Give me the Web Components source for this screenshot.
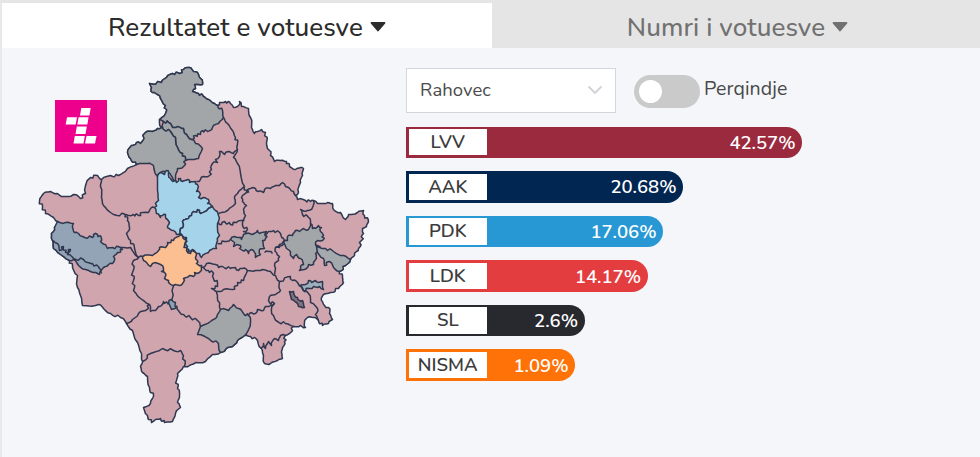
<!DOCTYPE html>
<html lang="sq">
<head>
<meta charset="utf-8">
<title>Rezultatet e votuesve</title>
<style>
  body {
    margin: 0;
    background: #f4f6f9;
    font-family: Nunito, Lato, "Noto Sans", sans-serif;
    color: #333;
  }
</style>
</head>
<body>
<results-page></results-page>

<script>
class TabItem extends HTMLElement {
  constructor() {
    super();
    this.attachShadow({ mode: "open" }).innerHTML = `
      <style>
        :host {
          display: flex;
          align-items: center;
          justify-content: center;
          gap: 7px;
          box-sizing: border-box;
          padding-top: 4px;
          font-size: 26px;
          font-weight: 500;
          letter-spacing: var(--tab-spacing, 0);
          color: #717171;
          background: #e5e5e5;
        }
        :host([active]) {
          color: #2c2c2c;
          background: #fff;
        }
        svg { margin-top: -1px; }
      </style>
      <span><slot></slot></span>
      <svg width="16" height="10" viewBox="0 0 16 10">
        <path d="M1.5 1h13L8 8.5z" fill="currentColor" stroke="currentColor" stroke-width="1.8" stroke-linejoin="round"/>
      </svg>`;
  }
}
customElements.define("tab-item", TabItem);

class CitySelect extends HTMLElement {
  constructor() {
    super();
    this.attachShadow({ mode: "open" }).innerHTML = `
      <style>
        :host {
          display: flex;
          align-items: center;
          justify-content: space-between;
          box-sizing: border-box;
          width: 210px;
          height: 45px;
          padding: 0 12px 0 13px;
          border: 1px solid #d3d7dd;
          background: #fff;
          font-size: 18.5px;
          letter-spacing: .05px;
          color: #4a4a4a;
        }
      </style>
      <span><slot></slot></span>
      <svg width="16" height="10" viewBox="0 0 16 10">
        <path d="M1.5 1.5 8 8l6.5-6.5" fill="none" stroke="#cfd2d6" stroke-width="1.8"/>
      </svg>`;
  }
}
customElements.define("city-select", CitySelect);

class ToggleSwitch extends HTMLElement {
  constructor() {
    super();
    this.attachShadow({ mode: "open" }).innerHTML = `
      <style>
        :host {
          display: flex;
          gap: 4px;
          font-size: 19.5px;
          letter-spacing: .1px;
          line-height: 24px;
          color: #484848;
        }
        .track {
          box-sizing: border-box;
          width: 66px;
          height: 33px;
          margin-top: 7px;
          padding: 5px;
          border-radius: 17px;
          background: #cacaca;
        }
        .knob {
          width: 23px;
          height: 23px;
          border-radius: 50%;
          background: #fff;
        }
        .text { padding-top: 9px; }
      </style>
      <div class="track"><div class="knob"></div></div>
      <span class="text"><slot></slot></span>`;
  }
}
customElements.define("toggle-switch", ToggleSwitch);

class PartyBar extends HTMLElement {
  connectedCallback() {
    this.attachShadow({ mode: "open" }).innerHTML = `
      <style>
        :host {
          display: flex;
          align-items: center;
          justify-content: space-between;
          box-sizing: border-box;
          width: ${this.getAttribute("width")}px;
          height: 31.6px;
          padding: 0 6.5px 0 2.5px;
          border-radius: 0 16px 16px 0;
          background: ${this.getAttribute("color")};
        }
        .name {
          width: 78.5px;
          height: 26.4px;
          line-height: 26px;
          background: #fff;
          color: #3c3c3c;
          font-size: 18.5px;
          font-weight: 600;
          text-align: center;
        }
        .value {
          padding-top: 1px;
          color: #fff;
          font-size: 18.5px;
          font-weight: 600;
        }
      </style>
      <span class="name"><slot></slot></span>
      <span class="value">${this.getAttribute("value")}</span>`;
  }
}
customElements.define("party-bar", PartyBar);

class TvLogo extends HTMLElement {
  constructor() {
    super();
    this.attachShadow({ mode: "open" }).innerHTML = `
      <style>
        :host { display: block; width: 52px; height: 52px; }
        svg { display: block; }
      </style>
      <svg width="52" height="52" viewBox="0 0 52 52">
        <rect width="52" height="52" fill="#ec008c"/>
        <g fill="#fff">
          <path d="M26.3 8h9.4l-1.3 7.6H25z"/>
          <path d="M12 17.2h10l-1.3 7.3h-10z"/>
          <path d="M23.6 17.2h10l-1.3 7.3h-10z"/>
          <path d="M21.8 26.6h10l-1.3 7.3h-10z"/>
          <path d="M19.8 36h10l-1.3 7.5h-10z"/>
          <path d="M31.5 36h10l-1.5 7.5H30z"/>
        </g>
      </svg>`;
  }
}
customElements.define("tv-logo", TvLogo);

// Country outline, clockwise from the north-west corner
const OUTLINE = `149,83 161,82 166,77 172,73 179,73 183,69 189,67 193,71 197,72 200,78 202,84 194,84 195,88 192,91
  198,93 203,96 208,99 214,103 217,105 219,102 225,101 230,103 233,107 237,106 239,101 241,106 248,108 250,117
  251,127 254,133 257,131 261,129 265,132 266,142 269,150 270,155 274,161 280,160 286,161 289,166 295,169 300,167
  303,168 302,175 300,182 298,192 295,195 297,199 305,200 310,201 313,200 317,203 322,203 327,202 332,203 333,209
  340,212 345,219 348,214 357,212 363,210 364,215 368,221 366,226 362,228 363,233 361,240 358,248 356,251 354,255
  350,259 345,265 339,271 342,277 343,282 338,288 330,292 323,294 321,300 324,305 328,307 329,313 332,319 328,323
  322,325 318,320 313,317 307,317 304,322 305,327 300,325 293,326 289,333 285,335 284,341 282,347 281,352 282,358
  277,360 270,363 264,363 263,355 261,348 257,340 250,336 244,335 237,340 232,346 225,349 220,352 212,354 205,361
  195,362 189,365 183,366 177,373 176,380 177,388 179,395 177,402 180,407 175,413 172,421 164,422 160,418 155,419
  151,422 147,415 143,407 150,403 153,396 149,387 147,376 142,372 140,366 142,361 141,353 137,342 132,330 126,323
  120,317 110,313 103,308 98,304 95,305 82,305 80,295 77,287 77,275 72,267 69,260 60,254 53,248 52,240 51,233
  54,227 57,221 53,217 45,213 42,207 39,201 43,193 50,191 57,193 63,196 73,194 80,198 85,193 86,182 90,177 97,175
  101,179 110,175 118,175 127,168 136,164 130,158 127,152 131,145 136,142 140,143 145,132 152,131 157,128 161,127
  159,119 165,113 165,105 160,98 157,94 152,92 151,87`;

// Municipalities led by someone other than the pink party
const AREAS = [
  ["#a3a6a8", "149,83 161,82 166,77 172,73 179,73 183,69 189,67 193,71 197,72 200,78 202,84 194,84 195,88 192,91 198,93 203,96 208,99 214,103 217,105 222,110 223,117 218,123 212,127 207,131 202,130 200,134 195,135 191,139 186,134 183,128 177,126 172,127 168,122 163,121 159,119 165,113 165,105 160,98 157,94 152,92 151,87"],
  ["#a3a6a8", "163,121 168,122 172,127 177,126 183,128 186,134 191,139 195,143 202,148 198,158 194,159 185,160 182,153 177,147 175,137 170,131 162,128 161,127"],
  ["#a3a6a8", "162,128 170,131 175,137 177,147 182,153 185,160 183,166 177,168 175,175 176,182 172,177 168,172 160,172 157,176 153,165 147,163 136,164 130,158 127,152 131,145 136,142 140,143 145,132 152,131 157,128 161,127"],
  ["#a5d3ea", "157,176 160,172 164,174 166,170 168,172 170,178 176,182 178,178 180,178 182,181 187,179 189,182 195,181 197,184 196,191 199,192 198,197 203,197 208,199 207,203 212,206 208,208 200,213 199,210 193,211 191,215 188,218 182,221 183,225 180,228 181,234 176,234 173,230 167,227 169,222 167,219 165,214 162,215 160,217 156,213 154,207 158,200 157,190"],
  ["#a5d3ea", "212,206 215,210 218,215 217,223 219,235 217,240 216,248 211,249 208,252 201,257 199,253 196,253 192,249 187,252 187,246 185,242 186,237 181,234 180,228 183,225 182,221 188,218 191,215 193,211 199,210 200,213 208,208"],
  ["#fcbf91", "181,234 184,239 186,238 184,245 186,250 190,253 192,250 196,253 195,257 197,260 196,263 201,265 201,270 199,272 194,272 193,276 189,275 183,278 182,283 179,285 173,285 169,283 168,280 164,278 165,273 161,271 163,268 160,264 152,263 150,266 145,261 142,256 152,255 158,250 159,247 165,247 167,242 173,240 178,236"],
  ["#93a4b6", "57,221 65,222 73,223 72,227 74,232 78,233 82,236 92,237 93,234 97,234 101,238 100,241 102,243 105,244 107,248 112,247 120,247 122,249 117,252 113,256 114,260 112,263 108,264 103,267 99,274 93,272 85,269 78,265 73,259 69,260 60,254 53,248 52,240 51,233 54,227"],
  ["#a3a6a8", "230,239 234,236 238,237 241,239 243,234 246,233 252,234 257,230 259,233 266,231 265,238 262,240 264,248 259,249 260,254 255,257 254,252 251,249 248,253 245,249 242,250 239,248 240,245 236,244 233,246 234,242"],
  ["#a3a6a8", "283,241 287,240 287,236 292,235 295,230 299,231 303,228 308,229 310,223 312,228 315,228 318,225 321,227 320,231 323,235 322,240 317,240 315,244 317,249 315,253 316,258 313,264 308,264 306,268 299,270 300,266 303,264 300,258 296,254 293,258 290,255 289,250 286,248"],
  ["#a3a9ad", "316,246 325,248 333,251 343,255 350,259 345,265 339,271 333,267 329,261 324,265 323,258 317,252"],
  ["#9bb0bc", "300,285 305,284 308,280 311,282 315,280 318,282 322,281 323,289 319,286 313,286 309,288 303,290"],
  ["#81717f", "289,291 293,291 294,295 297,297 299,300 302,300 304,307 298,306 296,302 291,299"],
  ["#8da2b5", "168,302 171,299 175,302 176,307 171,309"],
  ["#a3a6a8", "200,326 210,321 216,317 220,309 228,310 233,304 238,308 243,313 248,315 250,322 246,333 244,335 237,340 232,346 225,349 220,352 218,343 208,338 197,334"],
];

// Remaining borders between the pink municipalities
const BORDERS = [
  "223,117 227,123 232,130 235,137 237,143 237,149 233,157 237,163 240,173 244,186",
  "237,149 233,153 228,151 224,154 219,151 219,156 215,159 217,162 212,163 211,169 209,175 203,176 200,179 196,181",
  "244,186 246,192 250,188 255,188 258,191 263,192 264,189 270,188 275,185 279,185 282,182 285,186 288,187 293,191 295,195",
  "101,179 100,186 101,197 103,205 110,212 113,214 125,214 133,214 138,215 143,212 148,212 150,208 154,207",
  "125,214 127,220 129,227 126,233 130,240 134,248 138,257",
  "120,247 130,247 138,257 142,256",
  "52,240 57,243 59,250 63,246 65,252 70,249 67,254 73,258 83,259 87,262 92,263 99,268 101,273",
  "138,257 133,260 132,272 133,280 133,290 140,298 149,304 145,310 138,313 132,319 126,323",
  "149,304 150,311 155,310 158,306 161,305 163,301 168,304",
  "173,285 172,292 171,300",
  "176,305 178,310 183,314 190,317 198,321 200,326",
  "142,361 150,353 162,348 173,350 180,350 183,355 184,366",
  "201,265 203,267 208,270 213,273 213,278 217,282 217,286 211,288 216,291 223,289 232,289 237,285 237,282 243,280 247,270",
  "203,267 206,263 215,264 218,267 222,266 230,268 235,267 238,270 242,268 247,270 255,270 262,269 270,271 275,275 279,281",
  "216,291 217,295 219,302 220,309",
  "248,315 251,312 255,313 257,309 263,310 265,306 270,305 274,303 269,302 269,296 275,294 280,290 279,281",
  "274,303 271,308 273,315 277,321 285,323 293,326",
  "260,348 263,343 265,348 268,341 271,345 274,338 278,340 280,335 285,335",
  "279,281 290,276 292,280 297,282 301,286 304,291 308,293 310,302 317,308 315,314 318,320",
  "218,213 227,210 235,203 234,198 237,193 244,186",
  "246,192 241,197 242,201 246,205 243,209 245,215 242,225 247,229 243,231 246,233",
  "218,222 221,224 224,221 230,224 236,222 244,220",
  "217,243 224,241 230,239",
  "265,236 268,231 273,230 280,233 283,238 283,241 279,244 279,247 275,247 276,252 279,256 278,260 274,265 274,274",
  "264,252 268,251 272,253",
  "275,247 284,243",
  "313,200 312,207 307,210 300,209 302,214 308,217 310,223",
  "315,245 320,246",
];

class KosovoMap extends HTMLElement {
  connectedCallback() {
    const areas = AREAS.map(([fill, pts]) =>
      `<path d="${this.trace(pts)}Z" fill="${fill}"/>`).join("");
    const borders = BORDERS.map(pts =>
      `<path d="${this.trace(pts)}" fill="none"/>`).join("");
    this.attachShadow({ mode: "open" }).innerHTML = `
      <style>
        :host { display: block; width: 340px; height: 366px; }
        svg { display: block; }
        path { stroke: #2f3850; stroke-width: 1.5; stroke-linejoin: round; }
      </style>
      <svg width="340" height="366" viewBox="34.5 62.5 340 366">
        <path d="${this.trace(OUTLINE)}Z" fill="#d1a5ae"/>
        ${areas}${borders}
      </svg>`;
  }

  // Roughens every segment; neighbours get the same kinks on a shared edge
  trace(text) {
    const pts = text.trim().split(/\s+/).map(p => p.split(",").map(Number));
    let d = "M" + pts[0];
    for (let i = 1; i < pts.length; i++) {
      const [ax, ay] = pts[i - 1];
      const [bx, by] = pts[i];
      const side = ax < bx || (ax === bx && ay < by) ? 1 : -1;
      const len = Math.hypot(bx - ax, by - ay) || 1;
      const seed = ax * bx * 7 + ay * by * 13;
      const steps = len > 5 ? [0.3, 0.5, 0.7] : [0.5];
      for (const t of steps) {
        const n = side > 0 ? t : 1 - t;
        const kink = ((seed + Math.round(n * 10) * 17) % 11 - 5) * 0.24;
        const x = ax + (bx - ax) * t - (by - ay) / len * kink * side;
        const y = ay + (by - ay) * t + (bx - ax) / len * kink * side;
        d += `L${x.toFixed(1)},${y.toFixed(1)}`;
      }
      d += `L${bx},${by}`;
    }
    return d;
  }
}
customElements.define("kosovo-map", KosovoMap);

class ResultsPage extends HTMLElement {
  constructor() {
    super();
    this.attachShadow({ mode: "open" }).innerHTML = `
      <style>
        :host {
          display: block;
          box-sizing: border-box;
          width: 980px;
          height: 457px;
          border-top: 3px solid #e5e5e5;
          border-left: 2px solid #e7e8ea;
          overflow: hidden;
        }
        .tabs {
          display: grid;
          grid-template-columns: 490px 1fr;
          height: 44.5px;
        }
        .content {
          display: grid;
          grid-template-columns: 340px 1fr;
          column-gap: 31px;
          padding: 15px 0 0 33px;
        }
        .map { position: relative; }
        tv-logo {
          position: absolute;
          left: 19.5px;
          top: 37.5px;
        }
        .results { padding-top: 5px; }
        .filters {
          display: flex;
          gap: 18px;
          margin-bottom: 14px;
        }
        .bars {
          display: grid;
          gap: 13px;
        }
      </style>
      <div class="tabs">
        <tab-item active style="--tab-spacing: .07px">Rezultatet e votuesve</tab-item>
        <tab-item style="--tab-spacing: .1px; padding-left: 3px">Numri i votuesve</tab-item>
      </div>
      <div class="content">
        <div class="map">
          <kosovo-map></kosovo-map>
          <tv-logo></tv-logo>
        </div>
        <div class="results">
          <div class="filters">
            <city-select>Rahovec</city-select>
            <toggle-switch>Perqindje</toggle-switch>
          </div>
          <div class="bars">
            <party-bar color="#9b2a3f" width="396" value="42.57%">LVV</party-bar>
            <party-bar color="#012652" width="277" value="20.68%">AAK</party-bar>
            <party-bar color="#2898d4" width="257" value="17.06%">PDK</party-bar>
            <party-bar color="#e43d3f" width="241.5" value="14.17%">LDK</party-bar>
            <party-bar color="#28292f" width="178.5" value="2.6%">SL</party-bar>
            <party-bar color="#ff7207" width="169" value="1.09%">NISMA</party-bar>
          </div>
        </div>
      </div>`;
  }
}
customElements.define("results-page", ResultsPage);
</script>
</body>
</html>
